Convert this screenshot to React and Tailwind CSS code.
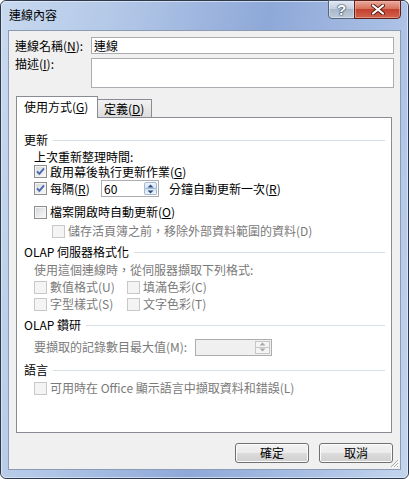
import React from 'react';

const font = "font-['Noto_Sans_CJK_TC','Noto_Sans',sans-serif]";

function Check({ checked, disabled }) {
  return (
    <span
      className={`flex h-[13px] w-[13px] shrink-0 items-center justify-center border ${
        disabled
          ? 'border-[#c8c8c8] bg-[#f4f4f4]'
          : 'border-[#8e8f8f] bg-gradient-to-br from-[#d4d6d9] to-[#fbfbfb] shadow-[inset_0_0_0_1px_#f4f4f4]'
      }`}
    >
      {checked && (
        <svg width="11" height="11" viewBox="0 0 11 11">
          <path d="M2 5.3 L4.4 7.9 L9 2.4" fill="none" stroke="#4866b0" strokeWidth="1.8" />
        </svg>
      )}
    </span>
  );
}

function Section({ title, className = '' }) {
  return (
    <div className={`flex h-[18px] items-center pl-[7px] pr-[6px] ${className}`}>
      <span>{title}</span>
      <span className="ml-[5px] h-px flex-1 bg-[#d5dfe5]" />
    </div>
  );
}

function Arrow({ up, color }) {
  return (
    <svg width="7" height="4" viewBox="0 0 7 4">
      <path d={up ? 'M0.5 3.5 L3.5 0.5 L6.5 3.5 Z' : 'M0.5 0.5 L3.5 3.5 L6.5 0.5 Z'} fill={color} />
    </svg>
  );
}

function Button({ children }) {
  return (
    <button className="flex h-[20px] w-[74px] items-center justify-center rounded-[3px] border border-[#707070] bg-[linear-gradient(#f2f2f2_0%,#ebebeb_50%,#dddddd_50%,#cfcfcf_100%)] text-[12px] leading-[14px] text-black shadow-[inset_0_0_0_1px_#fcfcfc]">
      {children}
    </button>
  );
}

export default function App() {
  return (
    <div className={`${font} h-[479px] w-[409px] overflow-hidden bg-white text-[12px] leading-[14px] text-black`}>
      {/* window frame */}
      <div className="h-[479px] w-[409px] rounded-[6px] border border-[#2e3a4c] bg-[linear-gradient(100deg,#c8d9ef_0%,#b2c7e7_25%,#8ea8d8_55%,#a9bfe4_80%,#c4d5ed_100%)]">
        <div className="flex h-[477px] w-[407px] flex-col rounded-[5px] border border-[#e4ecf7]/70">
          {/* title bar */}
          <div className="flex h-[28px] shrink-0 items-start">
            <span className="ml-[7px] mt-[6px] text-[12px] leading-[14px] text-black">連線內容</span>
            <div className="ml-auto mr-[6px] -mt-[2px] flex h-[19px]">
              <div className="flex w-[27px] items-center justify-center rounded-bl-[4px] border border-[#56657c] bg-[linear-gradient(#e1e8f2_0%,#c3cfdf_45%,#a9b7cb_50%,#bccadb_100%)] shadow-[inset_0_0_0_1px_#eef3fa80]">
                <span className="font-['Liberation_Sans',sans-serif] text-[15px] font-bold leading-[15px] text-white [text-shadow:0_0_1px_#2b3a52,0_0_2px_#2b3a52,0_0_1px_#2b3a52]">?</span>
              </div>
              <div className="-ml-px flex w-[47px] items-center justify-center rounded-br-[4px] border border-[#5f2019] bg-[linear-gradient(#e9a99b_0%,#d7735f_45%,#c4412f_50%,#d0634c_100%)] shadow-[inset_0_0_0_1px_#f3c3b880]">
                <svg width="14" height="11" viewBox="0 0 14 11">
                  <path d="M2 1.5 L12 9.5 M12 1.5 L2 9.5" stroke="#5a1d16" strokeWidth="4" strokeLinecap="round" />
                  <path d="M2 1.5 L12 9.5 M12 1.5 L2 9.5" stroke="#ffffff" strokeWidth="2.2" strokeLinecap="round" />
                </svg>
              </div>
            </div>
          </div>

          {/* client area */}
          <div className="relative ml-[6px] flex h-[440px] w-[393px] flex-col border border-[#8b9bb3] bg-[#f0f0f0]">
            <div className="mt-[6px] flex items-center pl-[6px]">
              <span className="w-[76px]">
                連線名稱(<u>N</u>):
              </span>
              <div className="flex h-[17px] w-[303px] items-center border border-[#abadb3] bg-white pl-[2px]">連線</div>
            </div>
            <div className="mt-[4px] flex pl-[6px]">
              <span className="w-[76px] leading-[12px]">
                描述(<u>I</u>):
              </span>
              <div className="h-[30px] w-[303px] border border-[#abadb3] bg-white" />
            </div>

            {/* tabs */}
            <div className="ml-[7px] mt-[8px] flex h-[21px] items-end">
              <div className="relative z-10 -mb-px flex h-[22px] w-[82px] items-start border border-b-0 border-[#898c95] bg-white pl-[7px] pt-[3px]">
                使用方式(<u>G</u>)
              </div>
              <div className="-ml-px flex h-[18px] w-[55px] items-start border border-b-0 border-[#898c95] bg-[linear-gradient(#f2f2f2,#dcdcdc)] pl-[6px] pt-[2px]">
                定義(<u>D</u>)
              </div>
            </div>

            {/* panel */}
            <div className="ml-[7px] flex h-[316px] w-[376px] flex-col border border-[#898c95] bg-white">
              <Section title="更新" className="mt-[13px]" />
              <div className="flex h-[15px] items-center pl-[17px]">上次重新整理時間:</div>
              <div className="flex h-[15px] items-center gap-[3px] pl-[17px]">
                <Check checked />
                <span>
                  啟用幕後執行更新作業(<u>G</u>)
                </span>
              </div>
              <div className="flex h-[19px] items-center pl-[17px]">
                <Check checked />
                <span className="ml-[3px] w-[51px]">
                  每隔(<u>R</u>)
                </span>
                <div className="flex h-[17px] w-[58px] border border-[#abadb3] bg-white">
                  <span className="flex-1 pl-[2px] leading-[15px]">60</span>
                  <div className="my-[1px] mr-[1px] flex w-[13px] flex-col">
                    <div className="flex flex-1 items-center justify-center rounded-t-[2px] border border-[#a3b8d3] bg-[linear-gradient(#eef5fc,#d4e4f5)]">
                      <Arrow up color="#2e4b7a" />
                    </div>
                    <div className="flex flex-1 items-center justify-center rounded-b-[2px] border border-t-0 border-[#a3b8d3] bg-[linear-gradient(#d4e4f5,#eef5fc)]">
                      <Arrow color="#2e4b7a" />
                    </div>
                  </div>
                </div>
                <span className="ml-[10px]">
                  分鐘自動更新一次(<u>R</u>)
                </span>
              </div>
              <div className="mt-[4px] flex h-[20px] items-center gap-[3px] pl-[17px]">
                <Check />
                <span>
                  檔案開啟時自動更新(<u>O</u>)
                </span>
              </div>
              <div className="flex h-[18px] items-center gap-[3px] pl-[35px] text-[#7a7a7a]">
                <Check disabled />
                <span>儲存活頁簿之前，移除外部資料範圍的資料(D)</span>
              </div>

              <Section title="OLAP 伺服器格式化" className="mt-[2px] h-[20px]" />
              <div className="flex h-[16px] items-center pl-[17px] text-[#7a7a7a]">使用這個連線時，從伺服器擷取下列格式:</div>
              <div className="flex h-[18px] items-center pl-[17px] text-[#7a7a7a]">
                <div className="flex w-[93px] items-center gap-[3px]">
                  <Check disabled />
                  <span>數值格式(U)</span>
                </div>
                <div className="flex items-center gap-[3px]">
                  <Check disabled />
                  <span>填滿色彩(C)</span>
                </div>
              </div>
              <div className="flex h-[16px] items-center pl-[17px] text-[#7a7a7a]">
                <div className="flex w-[93px] items-center gap-[3px]">
                  <Check disabled />
                  <span>字型樣式(S)</span>
                </div>
                <div className="flex items-center gap-[3px]">
                  <Check disabled />
                  <span>文字色彩(T)</span>
                </div>
              </div>

              <Section title="OLAP 鑽研" className="mt-[3px] h-[20px]" />
              <div className="mt-[2px] flex h-[20px] items-center pl-[17px] text-[#7a7a7a]">
                <span className="w-[161px]">要擷取的記錄數目最大值(M):</span>
                <div className="flex h-[17px] w-[77px] border border-[#adadad] bg-[#f0f0f0]">
                  <span className="flex-1" />
                  <div className="my-[1px] mr-[1px] flex w-[15px] flex-col">
                    <div className="flex flex-1 items-center justify-center border border-[#c7c7c7] bg-[#f4f4f4]">
                      <Arrow up color="#a8a8a8" />
                    </div>
                    <div className="flex flex-1 items-center justify-center border border-t-0 border-[#c7c7c7] bg-[#f4f4f4]">
                      <Arrow color="#a8a8a8" />
                    </div>
                  </div>
                </div>
              </div>

              <Section title="語言" className="mt-[4px]" />
              <div className="flex h-[18px] items-center gap-[3px] pl-[17px] text-[#7a7a7a]">
                <Check disabled />
                <span>可用時在 Office 顯示語言中擷取資料和錯誤(L)</span>
              </div>
            </div>

            {/* buttons */}
            <div className="mr-[7px] mt-[10px] flex justify-end gap-[10px]">
              <Button>確定</Button>
              <Button>取消</Button>
            </div>

            {/* resize grip */}
            <svg className="absolute bottom-[1px] right-[1px]" width="10" height="10" viewBox="0 0 10 10">
              <path d="M9 2 L2 9 M9 5 L5 9 M9 8 L8 9" stroke="#a9a9a9" strokeWidth="1" />
              <path d="M10 3 L3 10 M10 6 L6 10" stroke="#ffffff" strokeWidth="1" />
            </svg>
          </div>
        </div>
      </div>
    </div>
  );
}
